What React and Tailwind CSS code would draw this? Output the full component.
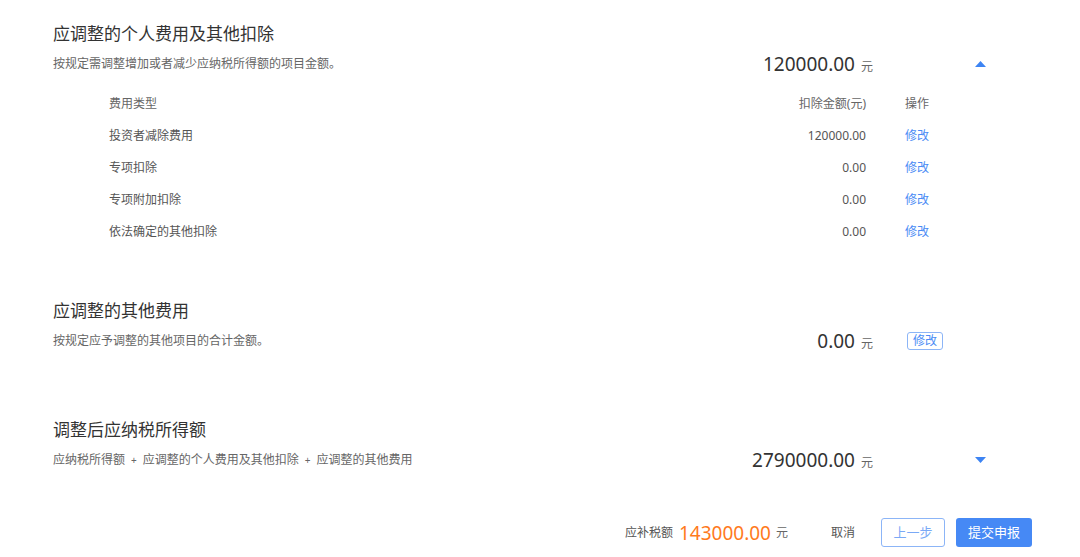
const deductions = [
  { name: '投资者减除费用', amount: '120000.00' },
  { name: '专项扣除', amount: '0.00' },
  { name: '专项附加扣除', amount: '0.00' },
  { name: '依法确定的其他扣除', amount: '0.00' },
];

const font = { fontFamily: '"Noto Sans", "Noto Sans CJK SC", sans-serif' };

const Amount = ({ value }) => (
  <div className="flex items-baseline">
    <span className="text-[19px] leading-7 text-[#333]">{value}</span>
    <span className="ml-[6px] text-[12px] text-[#666]">元</span>
  </div>
);

const Caret = ({ up }) => (
  <svg width="11" height="6" viewBox="0 0 11 6" className="fill-[#3d84f3]">
    {up ? <path d="M0 6 L5.5 0 L11 6 Z" /> : <path d="M0 0 L11 0 L5.5 6 Z" />}
  </svg>
);

const SectionHead = ({ title, desc, value, action }) => (
  <div>
    <h2 className="text-[17px] leading-6 text-[#333]">{title}</h2>
    <div className="mt-1 flex h-7 items-center">
      <p className="flex-1 text-[12px] text-[#666]">{desc}</p>
      <Amount value={value} />
      <div className="flex w-[117px] items-center">{action}</div>
    </div>
  </div>
);

export default function App() {
  return (
    <div className="min-h-screen bg-white" style={font}>
      <div className="pl-[53px] pr-[90px] pt-[22px]">
        <SectionHead
          title="应调整的个人费用及其他扣除"
          desc="按规定需调整增加或者减少应纳税所得额的项目金额。"
          value="120000.00"
          action={<span className="ml-[102px]"><Caret up /></span>}
        />

        <div className="mt-[10px] pl-[56px] text-[12px]">
          <div className="flex h-8 items-center text-[#666]">
            <span className="flex-1">费用类型</span>
            <span>扣除金额(元)</span>
            <span className="ml-[39px] w-[85px]">操作</span>
          </div>
          {deductions.map((d) => (
            <div key={d.name} className="flex h-8 items-center text-[#555]">
              <span className="flex-1">{d.name}</span>
              <span>{d.amount}</span>
              <span className="ml-[39px] w-[85px] cursor-pointer text-[#4a8bf5]">修改</span>
            </div>
          ))}
        </div>

        <div className="mt-[51px]">
          <SectionHead
            title="应调整的其他费用"
            desc="按规定应予调整的其他项目的合计金额。"
            value="0.00"
            action={
              <button className="ml-[34px] h-[18px] w-[36px] rounded-[3px] border border-[#8cb5f7] text-[12px] leading-none text-[#4a8bf5]">
                修改
              </button>
            }
          />
        </div>

        <div className="mt-[63px]">
          <SectionHead
            title="调整后应纳税所得额"
            desc={
              <>
                应纳税所得额<span className="mx-[6px] text-[10px]">+</span>应调整的个人费用及其他扣除<span className="mx-[6px] text-[10px]">+</span>应调整的其他费用
              </>
            }
            value="2790000.00"
            action={<span className="ml-[102px]"><Caret /></span>}
          />
        </div>
      </div>

      <div className="mt-[44px] flex items-center justify-end pr-[48px]">
        <span className="text-[12px] text-[#555]">应补税额</span>
        <span className="ml-[6px] text-[19px] leading-7 text-[#ff7a1c]">143000.00</span>
        <span className="ml-[5px] text-[12px] text-[#666]">元</span>
        <span className="ml-[43px] text-[12px] text-[#555]">取消</span>
        <button className="ml-[26px] h-[29px] w-[64px] rounded-[3px] border border-[#8cb5f7] bg-white text-[13px] text-[#7aa9f6]">
          上一步
        </button>
        <button className="ml-[11px] h-[29px] w-[76px] rounded-[3px] bg-[#4689f5] text-[13px] text-white">
          提交申报
        </button>
      </div>
    </div>
  );
}
